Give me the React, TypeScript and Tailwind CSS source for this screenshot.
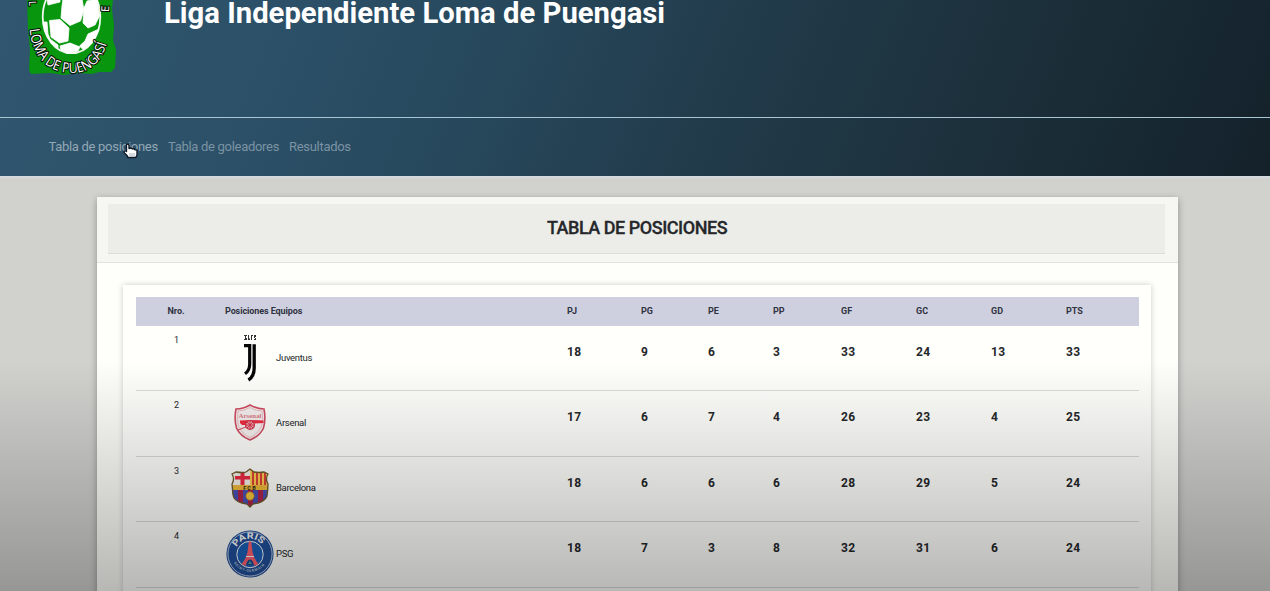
import React from "react";

type Team = { name: string; crest: React.ReactNode; stats: number[] };

function LeagueLogo() {
  return (
    <svg width="100" height="84" viewBox="20 0 100 84" className="block">
      <defs>
        <path id="motto" d="M29.5 29 C33 60 50 73.5 74 73 C96 71.5 108 54 110 24" />
      </defs>
      <path d="M27 -2H113L112 10L114 25L113 40L116 50L115 68L111 72L99 72L92 74L78 73L64 75L50 73L31 74L29 70L30 49L28 30Z" fill="#07960d" />
      <ellipse cx="71.5" cy="17" rx="28.8" ry="36.2" fill="#07960d" stroke="#f0f8f0" strokeWidth="1.8" />
      <g fill="#fff" stroke="#fff" strokeWidth="0.8" strokeLinejoin="round">
        <path d="M63 -1H82L84 10L80.5 21L70 25.5L61 18L62 6Z" />
        <path d="M49.5 20.5L60 19.5L69 28L68 41L59.5 43L51 37Z" />
        <path d="M87 1L97 -1L99.5 16L95 25L88 28L83 23L84 8Z" />
        <path d="M99 29L93 42L83 49.5L79.5 46L85 41L88 34Z" />
        <path d="M60 46L70 43L80 47L78 51L68 53L61 50Z" />
        <path d="M47 -1H60L60 2L48 5Z" />
        <path d="M43.5 22L47 22L48 34L50 39L58 45L58 48Q45 39 43.5 22Z" />
      </g>
      <g fontFamily="'Open Sans', sans-serif" fontSize="14" stroke="#061008" strokeWidth="2.2" strokeLinejoin="round" paintOrder="stroke" fill="#fff">
        <text><textPath href="#motto" textLength="117" lengthAdjust="spacingAndGlyphs">LOMA DE PUENGASÍ</textPath></text>
        <text transform="translate(29 1) rotate(88)" fontSize="10" textLength="5" lengthAdjust="spacingAndGlyphs">L</text>
        <text transform="translate(109 12) rotate(-88)" fontSize="11">E</text>
      </g>
    </svg>
  );
}

function Juventus() {
  return (
    <svg width="48" height="48" viewBox="0 0 48 48">
      <path d="M18 1h3v1h-1v2h1v2h-3v-1h1v-3h-1zM22 1h1v3l1 1v1h-2zM25 1h2v1h-1v4h-1zM28 1h2v2h-1v1h1v2h-2v-1h1v-1h-1z" fill="#333" />
      <path d="M18 11.7H23.7V30Q23.7 36.5 19 39.8" fill="none" stroke="#050505" strokeWidth="3.2" />
      <path d="M28.2 10.2V34Q28.2 42.5 22.4 46" fill="none" stroke="#050505" strokeWidth="3.3" />
    </svg>
  );
}

function Arsenal() {
  return (
    <svg width="48" height="48" viewBox="0 0 48 48">
      <path d="M10 10Q17 10 24 6Q31 10 38 10Q40 20 37.5 29Q34 37 24 41Q14 37 10.5 29Q8 20 10 10Z" fill="#f6f1f0" stroke="#d04c62" strokeWidth="1.6" />
      <path d="M12 12Q18 12 24 8.5Q30 12 36 12Q37.5 21 35.5 27Q32 35 24 38.5Q16 35 12.5 27Q10.5 20 12 12Z" fill="none" stroke="#e9a5ae" strokeWidth="0.7" />
      <text x="24" y="18.6" textAnchor="middle" textLength="23" lengthAdjust="spacingAndGlyphs" fontSize="6.5" fontWeight="700" fontFamily="Liberation Serif, serif" fill="#dc7a85">Arsenal</text>
      <path d="M14 21.5L25 21L37.5 21.5V24L28 24.5L26 26H16L14 24Z" fill="#ee2b40" />
      <circle cx="24" cy="26" r="4.4" fill="#eda8ae" stroke="#d83249" strokeWidth="1.3" />
      <path d="M24 22V30M20 26H28M21 23L27 29M27 23L21 29M20 28L12 31" stroke="#d83249" strokeWidth="0.9" />
    </svg>
  );
}

function Barcelona() {
  return (
    <svg width="48" height="48" viewBox="0 0 48 48">
      <defs>
        <clipPath id="barca">
          <path d="M6 9L10 7Q17 8 20 7L24 4L28 7Q33 8 38 7L42 9Q39 14 42 19Q42 24 41 31Q39 36 32 38L27 39L24 42L21 39L16 38Q8 36 7 30L6 19Q9 14 6 9Z" />
        </clipPath>
      </defs>
      <g clipPath="url(#barca)">
        <rect width="48" height="48" fill="#ad244b" />
        <path d="M0 0H24V20H0Z" fill="#f5f0e9" />
        <path d="M14.5 5H18.5V20H14.5ZM9 11H24V14.5H9Z" fill="#ed2940" />
        <path d="M24 0H48V20H24Z" fill="#ffcd50" />
        <path d="M26 5H28V20H26ZM30 5H32V20H30ZM34 5H36V20H34ZM38 5H40V20H38Z" fill="#dd4336" />
        <path d="M6 25H12V42H6ZM17 25H22V42H17ZM27 25H32V42H27ZM37 25H42V42H37Z" fill="#4750b8" />
        <path d="M5 20H43V25H5Z" fill="#f0ba3a" />
      </g>
      <text x="24" y="24.8" textAnchor="middle" fontSize="5.5" letterSpacing="1.2" fontWeight="700" fontFamily="Roboto, sans-serif" fill="#30291d">FCB</text>
      <circle cx="24" cy="31" r="4.2" fill="#f5c83c" stroke="#a46f2b" strokeWidth="0.7" />
      <path d="M6 9L10 7Q17 8 20 7L24 4L28 7Q33 8 38 7L42 9Q39 14 42 19Q42 24 41 31Q39 36 32 38L27 39L24 42L21 39L16 38Q8 36 7 30L6 19Q9 14 6 9Z" fill="none" stroke="#6e5a2b" strokeWidth="1.3" />
    </svg>
  );
}

function Psg() {
  return (
    <svg width="48" height="48" viewBox="0 0 48 48">
      <defs>
        <path id="paris" d="M9.5 20A15 15 0 0 1 38.5 20" />
        <path id="germain" d="M6 29A19 19 0 0 0 42 29" />
      </defs>
      <circle cx="24" cy="24" r="23.6" fill="#204f9b" />
      <circle cx="24" cy="24" r="22.1" fill="none" stroke="#e7edf3" strokeWidth="0.8" />
      <circle cx="24" cy="24.5" r="13.2" fill="#1b60b8" stroke="#fff" strokeWidth="1" />
      <g fontFamily="Roboto, sans-serif" fontWeight="700" fill="#fff">
        <text fontSize="8.8"><textPath href="#paris" textLength="30" lengthAdjust="spacingAndGlyphs" startOffset="3">PARIS</textPath></text>
        <text fontSize="3.6" fill="#b9c4d4"><textPath href="#germain" textLength="36" startOffset="4">SAINT-GERMAIN</textPath></text>
      </g>
      <path d="M22.8 11.5H25.2L26.5 22Q28 29 32.5 34L28.5 36Q24 25 19.5 36L15.5 34Q20 29 21.5 22Z" fill="#ff6070" />
      <path d="M20 26.5H28" stroke="#fff" strokeWidth="1" />
      <path d="M20.5 35Q20.5 30 24 29.5Q27.5 30 27.5 35Z" fill="#1b4a91" />
      <path d="M22 34L24 31L26 34Z" fill="#58a6a5" />
    </svg>
  );
}

const teams: Team[] = [
  { name: "Juventus", crest: <Juventus />, stats: [18, 9, 6, 3, 33, 24, 13, 33] },
  { name: "Arsenal", crest: <Arsenal />, stats: [17, 6, 7, 4, 26, 23, 4, 25] },
  { name: "Barcelona", crest: <Barcelona />, stats: [18, 6, 6, 6, 28, 29, 5, 24] },
  { name: "PSG", crest: <Psg />, stats: [18, 7, 3, 8, 32, 31, 6, 24] },
];

const headings = ["PJ", "PG", "PE", "PP", "GF", "GC", "GD", "PTS"];
const columns = "grid grid-cols-[80px_343px_74px_67px_65px_68px_75px_75px_75px_81px]";

export default function App() {
  return (
    <div className="relative flex h-[591px] w-full flex-col overflow-hidden bg-[#d1d2ce] font-[Roboto,sans-serif] text-[#25272a]">
      <header className="h-[178px] shrink-0 border-b-2 border-[#d3dade] bg-[linear-gradient(112deg,#30576f_0%,#2b5068_22%,#27485c_38%,#223c4c_55%,#1e3440_70%,#192b35_85%,#14212b_100%)]">
        <div className="flex h-[118px] border-b-[1.5px] border-[#a9c4d3] pl-5">
          <LeagueLogo />
          <h1 className="ml-[44px] text-[29.25px] leading-[26px] font-bold whitespace-nowrap text-white">
            Liga Independiente Loma de Puengasi
          </h1>
        </div>
        <nav className="flex h-[58px] items-center gap-[10px] pl-[48.5px] text-[13px] tracking-[-0.3px] whitespace-nowrap text-[#7b93a3]">
          <a className="w-[109.5px] text-[#93a7b4]">Tabla de posiciones</a>
          <a className="w-[111px]">Tabla de goleadores</a>
          <a>Resultados</a>
        </nav>
      </header>

      <main className="mt-[19px] ml-[97px] flex h-[460px] w-[1081px] shrink-0 flex-col rounded-[2px] bg-[#fefffa] shadow-[0_2px_7px_rgba(0,0,0,0.32)]">
        <div className="h-[66px] shrink-0 border-b border-[#e2e3df] bg-[#f6f7f3] pt-[7px] pr-[13px] pl-[11px]">
          <h2 className="flex h-[50px] items-center justify-center border-b border-[#dcddd9] bg-[#ecede9] pb-[2px] pl-px text-[18px] font-medium tracking-[-0.47px] [-webkit-text-stroke:0.3px_#25272a]">
            TABLA DE POSICIONES
          </h2>
        </div>
        <section className="mt-[22px] ml-[26px] w-[1028px] flex-1 bg-[#fffffc] px-[12.5px] pt-3 shadow-[0_0_6px_rgba(0,0,0,0.2)]">
          <div className={`${columns} h-[29px] items-center bg-[#cfd0df] pt-px text-[9px] font-bold text-[#30323f]`}>
            <span className="pl-[1px] text-center">Nro.</span>
            <span className="pl-[9.5px] tracking-[-0.1px]">Posiciones Equipos</span>
            {headings.map((heading) => (
              <span key={heading} className="pl-[8.5px]">{heading}</span>
            ))}
          </div>
          {teams.map((team, index) => (
            <div key={team.name} className={`${columns} h-[65.4px] border-b border-[#dbdcd8]`}>
              <span className="pt-[7px] pl-[2px] text-center text-[9px] leading-[14px]">{index + 1}</span>
              <span className="flex items-start gap-[2.5px] pt-[8px] pl-[10px]">
                {team.crest}
                <span className="pt-[16.5px] text-[9.5px] leading-[14px] tracking-[-0.3px]">{team.name}</span>
              </span>
              {team.stats.map((value, column) => (
                <strong key={headings[column]} className="pt-[17px] pl-[8.5px] text-[12px] leading-[18px] font-bold tracking-[0.4px]">
                  {value}
                </strong>
              ))}
            </div>
          ))}
        </section>
      </main>

      <div className="pointer-events-none absolute inset-x-0 bottom-0 h-[231px] bg-linear-to-b from-black/0 to-black/28" />
      <svg className="absolute top-[143px] left-[122px]" width="18" height="18" viewBox="0 0 18 18">
        <path d="M4.5 1.5Q6.5 .5 7 2.5V5.5L9 5L10.5 6L12 5.5L13 6.8L15 7V12L13.8 14.5H5.5V13L2 9.5Q2 7.5 4 8L4.5 8.5Z" fill="#fff" stroke="#101c28" strokeWidth="1.4" strokeLinejoin="round" />
        <path d="M8 10V13M10 10V13M12 10V13" stroke="#718391" strokeWidth="0.6" />
      </svg>
    </div>
  );
}
